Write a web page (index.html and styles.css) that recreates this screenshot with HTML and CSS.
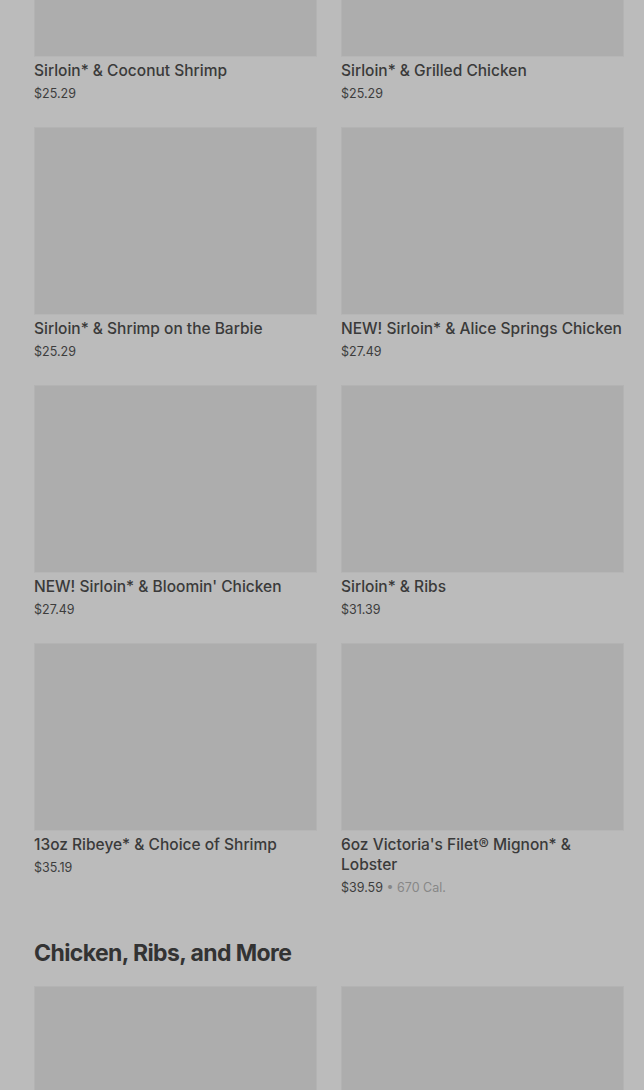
FILE: index.html
```html
<!DOCTYPE html>
<html lang="en">
<head>
    <meta charset="UTF-8">
    <meta name="viewport" content="width=device-width, initial-scale=1.0">
    <title>Menu</title>
    <link rel="stylesheet" href="styles.css">
</head>
<body>
    <div class="menu">
        <section class="category">
            <div class="grid">
                <div class="item">
                    <div class="photo"></div>
                    <div class="name">Sirloin* &amp; Coconut Shrimp</div>
                    <div class="price">$25.29</div>
                </div>
                <div class="item">
                    <div class="photo"></div>
                    <div class="name">Sirloin* &amp; Grilled Chicken</div>
                    <div class="price">$25.29</div>
                </div>
                <div class="item">
                    <div class="photo"></div>
                    <div class="name">Sirloin* &amp; Shrimp on the Barbie</div>
                    <div class="price">$25.29</div>
                </div>
                <div class="item">
                    <div class="photo"></div>
                    <div class="name">NEW! Sirloin* &amp; Alice Springs Chicken</div>
                    <div class="price">$27.49</div>
                </div>
                <div class="item">
                    <div class="photo"></div>
                    <div class="name">NEW! Sirloin* &amp; Bloomin' Chicken</div>
                    <div class="price">$27.49</div>
                </div>
                <div class="item">
                    <div class="photo"></div>
                    <div class="name">Sirloin* &amp; Ribs</div>
                    <div class="price">$31.39</div>
                </div>
                <div class="item">
                    <div class="photo"></div>
                    <div class="name">13oz Ribeye* &amp; Choice of Shrimp</div>
                    <div class="price">$35.19</div>
                </div>
                <div class="item">
                    <div class="photo"></div>
                    <div class="name">6oz Victoria's Filet&reg; Mignon* &amp; Lobster</div>
                    <div class="price">$39.59 <span class="cal">&bull; 670 Cal.</span></div>
                </div>
            </div>
        </section>

        <section class="category">
            <h2>Chicken, Ribs, and More</h2>
            <div class="grid">
                <div class="item">
                    <div class="photo"></div>
                </div>
                <div class="item">
                    <div class="photo"></div>
                </div>
            </div>
        </section>
    </div>
</body>
</html>
```

FILE: styles.css
```css
body {
    margin: 0;
    background-color: #bbbbbb;
    font-family: Inter, "Liberation Sans", Arial, sans-serif;
    color: #383838;
    overflow: hidden;
}
.menu {
    margin-top: -131px;
    padding: 0 20px 0 34px;
}
.grid {
    display: grid;
    grid-template-columns: 283px 283px;
    column-gap: 24px;
    row-gap: 24px;
}
.photo {
    height: 186px;
    background-color: #adadad;
    border: 1px solid #b3b3b3;
    border-bottom-color: #b6b6b6;
}
.name {
    margin-top: 4px;
    font-size: 15.5px;
    font-weight: 500;
    line-height: 20px;
    color: #3a3a3a;
}
.price {
    margin-top: 4px;
    font-size: 12.5px;
    line-height: 18px;
    color: #3d3d3d;
}
.cal {
    color: #878787;
}
h2 {
    margin: 41px 0 18px;
    font-size: 23px;
    font-weight: 700;
    line-height: 30px;
    letter-spacing: -0.6px;
    color: #333333;
}
```
